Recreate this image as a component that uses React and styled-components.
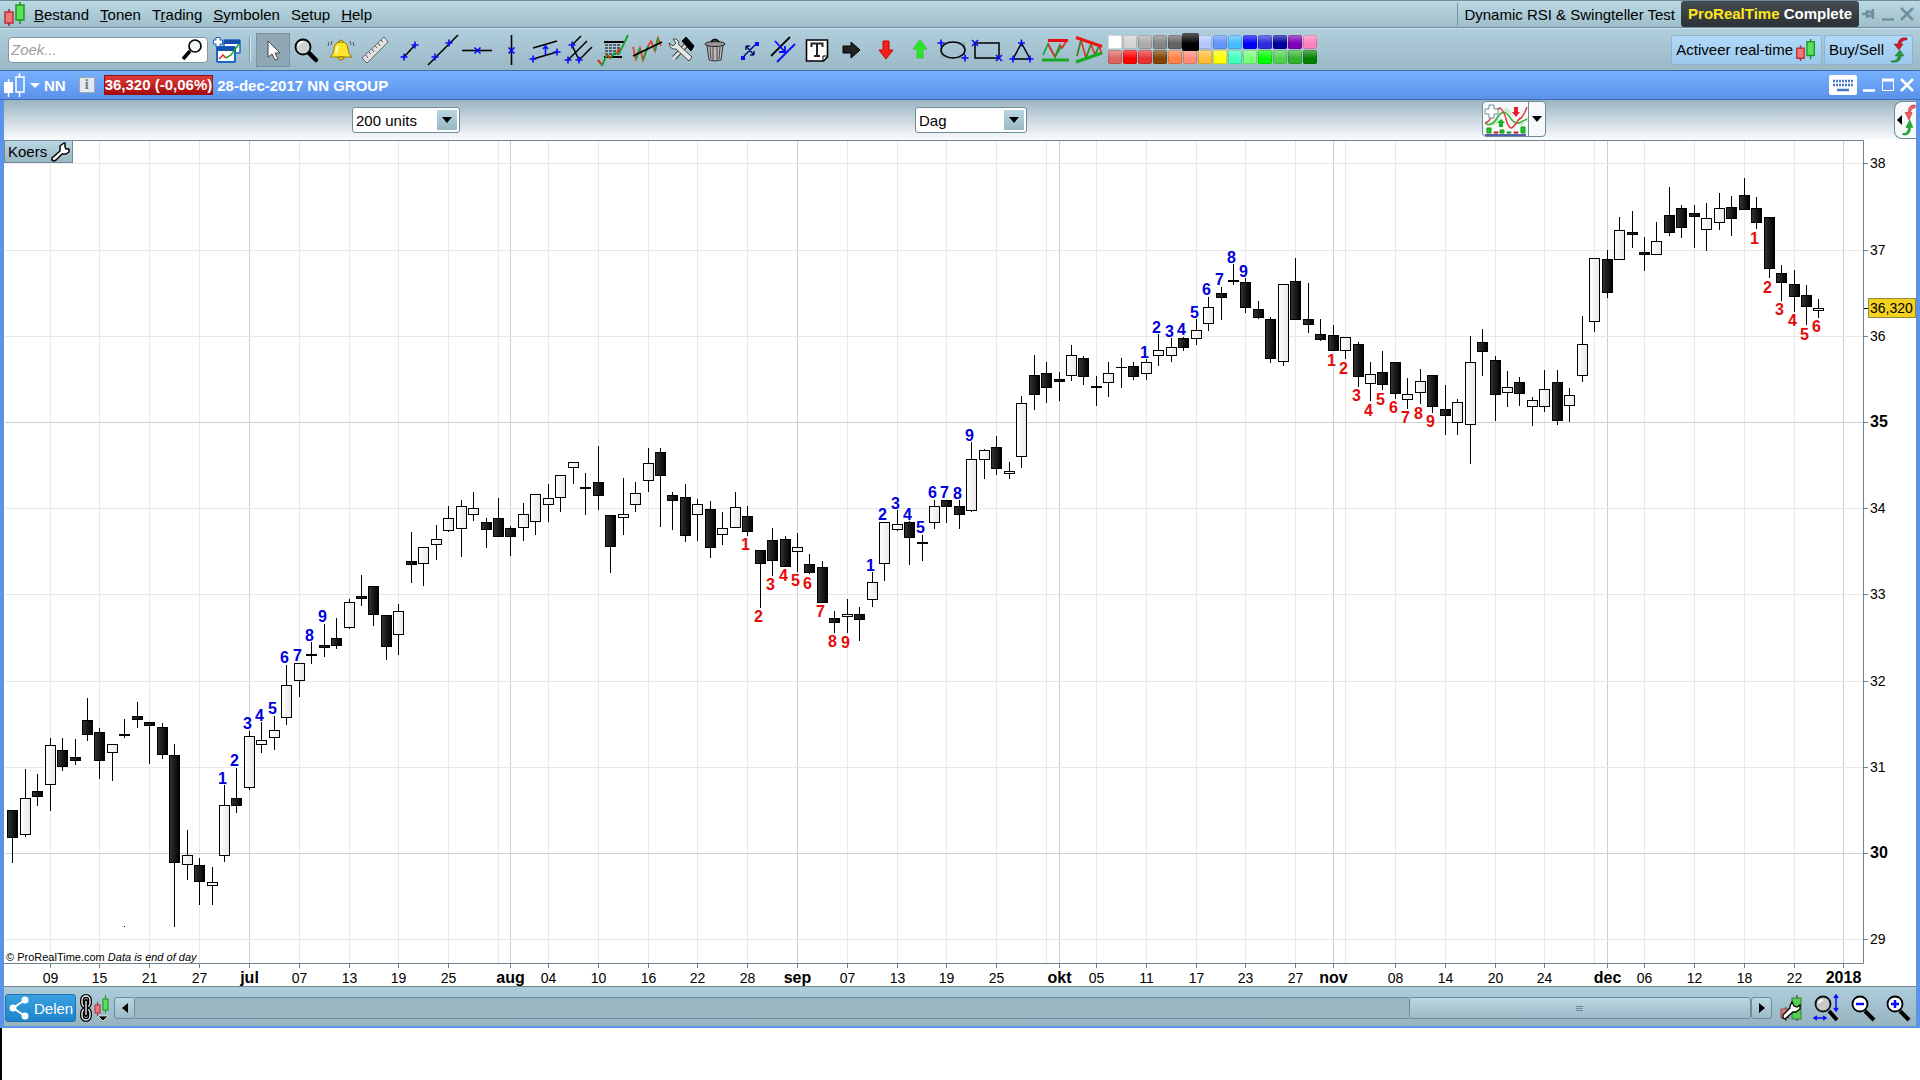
import React from "react";
import styled, { createGlobalStyle } from "styled-components";

const GlobalStyle = createGlobalStyle`
  * {
    box-sizing: border-box;
  }
  body {
    margin: 0;
    background: #fff;
    color: #000;
    font-family: "Liberation Sans", Arial, sans-serif;
    font-size: 15px;
  }
  button {
    font: inherit;
    color: inherit;
    background: none;
    border: 0;
    padding: 0;
  }
  svg {
    display: block;
  }
`;

/* ---------- data ---------- */

const MENU = [
  ["", "B", "estand"],
  ["", "T", "onen"],
  ["T", "r", "ading"],
  ["", "S", "ymbolen"],
  ["S", "e", "tup"],
  ["", "H", "elp"],
];

const COLORS = [
  ["#ffffff", "#d3d3d3", "#ababab", "#838383", "#636363", "#000000", "#b4c8ff", "#6496ff", "#46beff", "#0000ff", "#2d2ddc", "#0000a0", "#7d00b4", "#ff82be"],
  ["#dc6464", "#ff0000", "#e63232", "#824100", "#ff8246", "#ff8c78", "#ffbe3c", "#ffff00", "#46ffbe", "#78ff78", "#00ff00", "#50d250", "#32b432", "#008200"],
];

// [high, body top, body bottom, low, filled]
const CANDLES = [
  [810, 810, 838, 863, 1], [769, 798, 835, 837, 0], [774, 791, 797, 806, 1], [738, 745, 785, 811, 0],
  [738, 750, 767, 771, 1], [739, 757, 761, 765, 1], [698, 720, 735, 741, 1], [728, 732, 761, 779, 1],
  [744, 744, 753, 781, 0], [719, 734, 736, 738, 1], [702, 716, 720, 728, 1], [722, 722, 726, 764, 1],
  [723, 727, 755, 759, 1], [744, 755, 863, 927, 1], [830, 855, 865, 880, 0], [858, 865, 882, 905, 1],
  [867, 882, 886, 905, 0], [785, 805, 856, 862, 0], [768, 798, 806, 813, 1], [731, 736, 788, 790, 0],
  [722, 740, 745, 753, 0], [716, 730, 738, 750, 0], [665, 685, 718, 725, 0], [663, 663, 681, 697, 0],
  [642, 654, 656, 664, 1], [624, 645, 648, 657, 1], [618, 638, 646, 649, 1], [599, 602, 628, 629, 0],
  [575, 596, 599, 606, 1], [586, 586, 615, 626, 1], [615, 615, 647, 660, 1], [604, 611, 635, 655, 0],
  [532, 561, 565, 583, 1], [547, 547, 564, 586, 0], [525, 539, 545, 560, 0], [506, 518, 531, 532, 0],
  [500, 506, 529, 557, 0], [492, 508, 515, 521, 0], [518, 522, 530, 548, 1], [498, 518, 537, 537, 1],
  [526, 528, 537, 556, 1], [503, 514, 528, 541, 0], [494, 494, 522, 535, 0], [484, 498, 505, 522, 0],
  [475, 475, 498, 512, 0], [462, 462, 468, 484, 0], [473, 487, 489, 515, 1], [446, 482, 496, 510, 1],
  [515, 515, 547, 573, 1], [478, 514, 518, 535, 0], [482, 493, 505, 512, 0], [448, 463, 481, 492, 0],
  [448, 452, 476, 527, 1], [492, 495, 501, 530, 1], [484, 497, 536, 542, 1], [499, 504, 515, 541, 0],
  [501, 509, 548, 558, 1], [512, 528, 535, 545, 0], [492, 507, 528, 528, 0], [506, 516, 532, 536, 1],
  [550, 550, 564, 608, 1], [528, 540, 561, 576, 1], [536, 539, 567, 567, 1], [533, 547, 552, 572, 0],
  [554, 564, 573, 574, 1], [561, 567, 603, 603, 1], [611, 618, 623, 633, 1], [599, 614, 617, 633, 0],
  [607, 614, 620, 641, 1], [572, 582, 600, 607, 0], [522, 522, 564, 581, 0], [510, 524, 530, 531, 0],
  [521, 522, 538, 565, 1], [535, 542, 544, 561, 1], [500, 506, 523, 529, 0], [500, 500, 507, 523, 1],
  [500, 506, 515, 529, 1], [442, 459, 511, 512, 0], [449, 450, 460, 479, 0], [436, 447, 469, 475, 1],
  [462, 471, 474, 479, 0], [396, 403, 457, 468, 0], [355, 375, 395, 410, 1], [362, 373, 388, 403, 1],
  [372, 379, 382, 401, 1], [345, 355, 376, 381, 0], [356, 358, 377, 385, 1], [376, 386, 388, 406, 1],
  [362, 373, 383, 397, 0], [358, 367, 368, 388, 1], [362, 366, 377, 380, 1], [359, 362, 374, 380, 0],
  [334, 350, 356, 366, 0], [338, 347, 356, 362, 0], [337, 338, 348, 351, 1], [319, 330, 339, 345, 0],
  [297, 307, 324, 331, 0], [287, 293, 298, 320, 1], [264, 280, 282, 285, 1], [278, 282, 308, 313, 1],
  [301, 309, 318, 319, 1], [317, 319, 359, 363, 1], [284, 284, 362, 366, 0], [258, 281, 320, 320, 1],
  [283, 319, 325, 333, 1], [319, 334, 340, 341, 1], [325, 335, 351, 351, 1], [337, 337, 351, 359, 0],
  [342, 344, 377, 387, 1], [362, 374, 384, 401, 0], [351, 372, 385, 390, 1], [362, 362, 394, 399, 1],
  [378, 394, 400, 409, 0], [369, 381, 393, 404, 0], [375, 375, 407, 413, 1], [385, 409, 416, 435, 1],
  [399, 402, 423, 435, 0], [336, 362, 425, 464, 0], [329, 342, 352, 376, 1], [356, 360, 395, 421, 1],
  [371, 387, 393, 407, 0], [377, 382, 394, 406, 1], [397, 400, 407, 426, 0], [370, 389, 407, 412, 0],
  [370, 382, 421, 425, 1], [388, 395, 406, 422, 0], [316, 344, 376, 382, 0], [258, 258, 322, 332, 0],
  [250, 259, 293, 298, 1], [217, 230, 260, 260, 0], [211, 232, 235, 248, 1], [237, 252, 255, 271, 1],
  [222, 241, 255, 255, 0], [187, 215, 233, 236, 1], [205, 208, 228, 238, 1], [205, 213, 217, 248, 1],
  [203, 218, 230, 251, 0], [193, 208, 223, 230, 0], [196, 207, 219, 236, 1], [178, 195, 210, 210, 1],
  [197, 208, 223, 229, 1], [217, 217, 269, 278, 1], [265, 273, 283, 301, 1], [270, 284, 297, 312, 1],
  [285, 295, 307, 325, 1], [299, 308, 311, 318, 0],
];

const UP = "#0000dc";
const DOWN = "#e60a0a";

// first candle of the count, colour, baseline of every digit
const COUNTS = [
  { from: 17, color: UP, ys: [784, 766, 729, 721, 714, 663, 661, 641, 622] },
  { from: 59, color: DOWN, ys: [550, 622, 590, 581, 586, 589, 617, 647, 648] },
  { from: 69, color: UP, ys: [571, 520, 509, 520, 533, 498, 498, 499, 441] },
  { from: 91, color: UP, ys: [358, 333, 337, 335, 318, 295, 285, 263, 277] },
  { from: 106, color: DOWN, ys: [366, 374, 401, 416, 405, 413, 423, 419, 427] },
  { from: 140, color: DOWN, ys: [244, 293, 315, 326, 340, 332] },
];

const DATES = [
  [3, "09"], [7, "15"], [11, "21"], [15, "27"], [19, "jul"], [23, "07"], [27, "13"], [31, "19"], [35, "25"],
  [39, ""], [40, "aug"], [43, "04"], [47, "10"], [51, "16"], [55, "22"], [59, "28"], [63, "sep"], [67, "07"],
  [71, "13"], [75, "19"], [79, "25"], [83, ""], [84, "okt"], [87, "05"], [91, "11"], [95, "17"], [99, "23"],
  [103, "27"], [106, "nov"], [107, ""], [111, "08"], [115, "14"], [119, "20"], [123, "24"], [127, ""],
  [128, "dec"], [131, "06"], [135, "12"], [139, "18"], [143, "22"], [147, "2018"],
];

const PRICES = [
  [163, 38], [250, 37], [336, 36], [422, 35], [508, 34],
  [594, 33], [681, 32], [767, 31], [853, 30], [939, 29],
];

const candleX = (i) => 12 + Math.round(i * 12.4565 + 0.23) + 0.5;

/* ---------- icons ---------- */

function Icon({ w = 34, h = 34, children }) {
  return (
    <svg width={w} height={h} viewBox={`0 0 ${w} ${h}`} fill="none" stroke="#000" aria-hidden="true">
      {children}
    </svg>
  );
}

function Plus({ x, y }) {
  return <path d={`M${x - 3.5} ${y}h7M${x} ${y - 3.5}v7`} stroke="#0a0aff" strokeWidth="1.6" />;
}

function Times({ x, y }) {
  return <path d={`M${x - 3} ${y - 3}l6 6M${x + 3} ${y - 3}l-6 6`} stroke="#0a0aff" strokeWidth="1.6" />;
}

function Pair({ w = 22, h = 26 }) {
  return (
    <svg width={w} height={h} viewBox="0 0 22 26" aria-hidden="true">
      <path d="M5 8v17" stroke="#a02828" strokeWidth="1.5" />
      <rect x="1" y="11" width="8" height="11" fill="#f07878" stroke="#b02c2c" strokeWidth="1.4" />
      <path d="M16 1v22" stroke="#149614" strokeWidth="1.5" />
      <rect x="12" y="4" width="8" height="15" fill="#5ae05a" stroke="#149614" strokeWidth="1.4" />
    </svg>
  );
}

function SwapArrows({ w = 18, h = 26, red = "#c81e28", green = "#28963c" }) {
  return (
    <svg width={w} height={h} viewBox="0 0 18 26" preserveAspectRatio="none" aria-hidden="true">
      <path d="M17 1C11 0 8 3 8 7H4l5 6 4-6h-2c0-2 2-4 6-4z" fill={red} stroke="#96141e" strokeWidth=".5" />
      <path d="M1 25c7 1 10-2 10-6h3l-4-6-5 6h3c0 3-2 5-7 5z" fill={green} stroke="#14701e" strokeWidth=".5" />
    </svg>
  );
}

function Wrench({ size = 20 }) {
  return (
    <svg width={size} height={size} viewBox="0 0 20 20" aria-hidden="true">
      <path
        d="M10 9V4l4-3h1v4l1 2h3v3l-3 2h-4l-6 6-2 1-2-1v-2z"
        fill="#fff" stroke="#000" strokeWidth="1.500" strokeLinejoin="round"
      />
    </svg>
  );
}

const TOOLS = [
  ["Selecteren", <path d="M12 8v16l4-3 3 6 3-1-3-6h5z" fill="#fff" stroke="#444" />],
  ["Zoom", <>
    <path d="M18 19l8 8" strokeWidth="4.5" strokeLinecap="round" />
    <circle cx="13" cy="14" r="7.5" fill="#cfd2d2" strokeWidth="1.8" />
    <path d="M8 13q1-4 5-4" stroke="#fff" strokeWidth="2" />
  </>],
  ["Alarm", <>
    <path d="M6 24q4-3 4-8 0-7 7-7t7 7q0 5 4 8z" fill="#ffe628" stroke="#96780a" />
    <path d="M14 24a3 3 0 0 0 6 0zM15 9a2 2 0 0 1 4 0" fill="#f0c814" stroke="#96780a" />
    <path d="M5 9l-1 4M8 8l-1 4M26 8l1 4M29 9l1 4" stroke="#555" />
    <path d="M14 13q-2 4-2 8" stroke="#fffbc0" strokeWidth="2" />
  </>],
  ["Meten", <>
    <path d="M4 25L26 4l4 5L9 30z" fill="#e2e2e2" stroke="#666" />
    <path d="M8 22l2 3M11 19l2 2M14 16l2 3M17 13l2 2M20 10l2 3M23 7l2 2" stroke="#555" />
  </>],
  ["Segment", <><path d="M12 24l11-12" strokeWidth="1.6" /><Plus x={12} y={24} /><Plus x={23} y={12} /></>],
  ["Lijn", <><path d="M2 32L32 2" strokeWidth="1.6" /><Plus x={9} y={24} /><Plus x={23} y={10} /></>],
  ["Horizontale lijn", <><path d="M2 17.5h30" strokeWidth="1.6" /><Times x={17.5} y={17.5} /></>],
  ["Verticale lijn", <><path d="M17.5 2v30" strokeWidth="1.6" /><Times x={17.5} y={17.5} /></>],
  ["Kanaal", <>
    <path d="M5 15l24-7M5 26l24-7" strokeWidth="1.6" />
    <path d="M17.5 22v-8M15 16l2.5-3 2.5 3" stroke="#0a0aff" strokeWidth="1.6" />
    <Plus x={5} y={26} /><Plus x={29} y={19} />
  </>],
  ["Vork", <>
    <path d="M6 27L25 8M17 27l13-13M10 12l9-9M10 12l7 15" strokeWidth="1.5" />
    <Plus x={10} y={12} /><Plus x={6} y={27} /><Plus x={17} y={27} />
  </>],
  ["Fibonacci", <>
    <path d="M8 9h20M8 24h18" strokeWidth="1.8" />
    <path d="M9 12h16M9 15h16M9 18h16M9 21h14" strokeDasharray="3 1" />
    <path d="M2 27l4 5 5-10 3 3 5-5 4 1 9-19" stroke="#14a028" strokeWidth="1.8" />
    <path d="M2 27l3 4M11 22l3 3M21 20l3-5" stroke="#f01e1e" strokeWidth="1.8" />
  </>],
  ["Regressie", <>
    <path d="M3 14l3 12 4-11 3 12 5-14 3-5 4 10 3-13 3 8" stroke="#f03c28" strokeWidth="1.7" />
    <path d="M6 26l4-11M13 27l5-14M25 18l3-13" stroke="#14a028" strokeWidth="1.8" />
    <path d="M3 23L32 9" strokeWidth="1.8" />
  </>],
  ["Instellingen", <>
    <path d="M10 25L23 11" stroke="#444" strokeWidth="5" /><path d="M9 26L22 12" stroke="#ddd" strokeWidth="3" />
    <path d="M18 8l4-4 8 9-3 5z" fill="#000" />
    <path d="M5 10l4 3 3-3-3-4q6-1 6 6l13 12-3 4-13-12q-6 1-7-6z" fill="#e8e8e8" stroke="#444" />
  </>],
  ["Verwijderen", <>
    <path d="M9 12h16l-2 15q-6 2-12 0z" fill="#bbb" stroke="#333" />
    <path d="M12 14l1 12M15 14v13M19 14v13M22 14l-1 12" stroke="#444" />
    <ellipse cx="17" cy="11" rx="10" ry="2.5" fill="#999" stroke="#222" />
    <path d="M13 9q4-5 8 0" stroke="#111" strokeWidth="2" />
  </>],
  ["Segment kopiëren", <>
    <path d="M12 23L23 12M14 13l8 9M14 13v4M14 13h4M22 22v-4M22 22h-4" strokeWidth="1.5" stroke="#001478" />
    <path d="M9 23h4v4H9zM23 9h4v4h-4z" fill="#0a0aff" stroke="none" />
  </>],
  ["Parallel", <>
    <path d="M5 23L24 4" strokeWidth="1.8" /><path d="M11 29l18-18" stroke="#0a0aff" strokeWidth="1.8" />
    <path d="M9 8l10 11M19 13v6h-6" stroke="#0a0aff" strokeWidth="1.8" />
  </>],
  ["Tekst", <>
    <path d="M6.5 7h21v17l-4 4h-17z" fill="#fff" strokeWidth="1.6" /><path d="M27 23h-4v5" />
    <path d="M11.5 14v-3.500h11V14M17 11v12M14 23h6" stroke="#222" strokeWidth="2" />
  </>],
  ["Pijl rechts", <path d="M9 13h8V9l9 8-9 8v-5H9z" fill="#222" />],
  ["Pijl omlaag", <path d="M15 8h6v9h4l-7 9-7-9h4z" fill="#fa1e1e" stroke="#c80000" />],
  ["Pijl omhoog", <path d="M15 25h6v-9h4l-7-9-7 9h4z" fill="#28e628" stroke="#32c832" />],
  ["Ellips", <>
    <rect x="5.500" y="9.500" width="23" height="15" stroke="#8aa4b0" />
    <ellipse cx="17" cy="17" rx="12" ry="8" strokeWidth="1.5" /><Plus x={5} y={10} /><Plus x={29} y={25} />
  </>],
  ["Rechthoek", <>
    <rect x="5" y="10" width="24" height="15" strokeWidth="1.5" /><Times x={5} y={10} /><Times x={29} y={25} />
  </>],
  ["Driehoek", <>
    <path d="M17.500 10L9 26h17z" strokeWidth="1.5" /><Plus x={17.5} y={10} /><Plus x={9} y={26} /><Plus x={26} y={26} />
  </>],
  ["Dubbele top", <>
    <path d="M5 22l5-11 7 13 6-10" stroke="#14a028" strokeWidth="1.6" />
    <path d="M10 11l7 13 5-12 2 3 5-8" stroke="#e6281e" strokeWidth="1.6" />
    <path d="M17 24l5-12" stroke="#14a028" strokeWidth="1.6" />
    <path d="M10 7.500h20" stroke="#e60f14" strokeWidth="3" /><path d="M4 27h27" stroke="#14aa1e" strokeWidth="3" />
  </>],
  ["Driehoekpatroon", <>
    <path d="M5 23L9 7l5 18 5-14 4 11 4-9 3 8" stroke="#e6281e" strokeWidth="1.5" />
    <path d="M5 23L9 7M14 25l5-14M23 22l4-9" stroke="#14a028" strokeWidth="1.5" />
    <path d="M4 4.500l26 9" stroke="#f01414" strokeWidth="3" /><path d="M4 29l26-9" stroke="#14aa1e" strokeWidth="3" />
  </>],
];

/* ---------- parts ---------- */

function TopMenu() {
  return (
    <MenuBar>
      <Pair w={22} h={26} />
      <nav>
        {MENU.map(([before, key, after]) => (
          <button key={before + key + after}>{before}<u>{key}</u>{after}</button>
        ))}
      </nav>
      <div className="workspace">Dynamic RSI &amp; Swingteller Test</div>
      <Brand><span>ProRealTime</span> Complete</Brand>
      <WindowButtons $tight>
        <button aria-label="Vastzetten">
          <Icon w={14} h={14}><path d="M0 7h5M5 3v8M5 5h5v4H5M11 2v10" stroke="#71909e" strokeWidth="2.500" /></Icon>
        </button>
        <button aria-label="Minimaliseren">
          <Icon w={14} h={14}><path d="M1 12.500h12" stroke="#71909e" strokeWidth="2.500" /></Icon>
        </button>
        <button aria-label="Sluiten">
          <Icon w={14} h={14}><path d="M1 1l12 12M13 1L1 13" stroke="#71909e" strokeWidth="2.500" /></Icon>
        </button>
      </WindowButtons>
    </MenuBar>
  );
}

function Toolbar() {
  return (
    <ToolBar>
      <Search>
        <input type="search" aria-label="Zoeken" placeholder="Zoek..." />
        <Icon w={22} h={24}>
          <circle cx="14" cy="8" r="6" fill="#f4f6f6" strokeWidth="1.700" />
          <path d="M9 13l-7 8" strokeWidth="3.500" />
        </Icon>
      </Search>
      <button aria-label="Nieuw venster">
        <Icon w={28} h={28}>
          <rect x="11" y="4" width="16" height="13" rx="1" fill="#fff" stroke="#1e64c8" strokeWidth="1.500" />
          <path d="M11 6h16" stroke="#1450aa" strokeWidth="4" />
          <rect x="4" y="11" width="18" height="15" rx="1" fill="#fff" stroke="#1e64c8" strokeWidth="2" />
          <path d="M4 13h18" stroke="#1450aa" strokeWidth="4" />
          <path d="M6 23l4-4 3 3" stroke="#e61e1e" strokeWidth="1.500" />
          <path d="M13 22l5-3 8-11" stroke="#14aa28" strokeWidth="1.500" />
          <path d="M5 1v10M0 6h10" stroke="#2864b4" strokeWidth="5" /><path d="M5 2v8M1 6h8" stroke="#fff" strokeWidth="3" />
        </Icon>
      </button>
      <Separator />
      <Tools>
        {TOOLS.map(([label, drawing], i) => (
          <ToolButton key={label} aria-label={label} $active={i === 0}>
            <Icon>{drawing}</Icon>
          </ToolButton>
        ))}
      </Tools>
      <Palette>
        {COLORS.flat().map((color) => (
          <Swatch key={color} aria-label={`Kleur ${color}`} $color={color} $selected={color === "#000000"} />
        ))}
      </Palette>
      <Actions>
        <ActionButton>Activeer real-time <Pair w={22} h={24} /></ActionButton>
        <ActionButton>Buy/Sell <SwapArrows /></ActionButton>
      </Actions>
    </ToolBar>
  );
}

function Dropdown({ label, width, options }) {
  return (
    <SelectBox $width={width}>
      <select aria-label={label}>
        {options.map((o) => <option key={o}>{o}</option>)}
      </select>
      <span><Icon w={10} h={6}><path d="M0 0h10L5 6z" fill="#000" stroke="none" /></Icon></span>
    </SelectBox>
  );
}

function TitleBar() {
  return (
    <Title>
      <Icon w={22} h={26}>
        <path d="M4.500 7v18M15.500 1v24" stroke="#fff" strokeWidth="1.500" />
        <rect x="0" y="10" width="9" height="11" fill="#fff" stroke="none" />
        <rect x="12" y="5" width="8" height="15" fill="#6ba3f8" stroke="#fff" strokeWidth="1.500" />
      </Icon>
      <button className="symbol">
        <Icon w={10} h={5}><path d="M0 0h10L5 5z" fill="#fff" stroke="none" /></Icon>
        NN
      </button>
      <InfoButton aria-label="Info">i</InfoButton>
      <Quote>36,320 (-0,06%)</Quote>
      <span>28-dec-2017 NN GROUP</span>
      <WindowButtons>
        <button aria-label="Toetsenbord">
          <Icon w={28} h={20}>
            <rect width="28" height="20" rx="2" fill="#fff" stroke="none" />
            <path d="M4 6h21M4 10h21" stroke="#4678c8" strokeWidth="2.500" strokeDasharray="2 1" />
            <path d="M8 15h12" stroke="#4678c8" strokeWidth="2.500" />
          </Icon>
        </button>
        <button aria-label="Venster minimaliseren">
          <Icon w={14} h={14}><path d="M1 12.500h12" stroke="#fff" strokeWidth="2.500" /></Icon>
        </button>
        <button aria-label="Venster maximaliseren">
          <Icon w={14} h={14}><path d="M1.500 1v11.500h11V1" stroke="#fff" /><path d="M1 2h12" stroke="#fff" strokeWidth="3" /></Icon>
        </button>
        <button aria-label="Venster sluiten">
          <Icon w={14} h={14}><path d="M1 1l12 12M13 1L1 13" stroke="#fff" strokeWidth="2.500" /></Icon>
        </button>
      </WindowButtons>
    </Title>
  );
}

function OptionsBar() {
  return (
    <Options>
      <Dropdown label="Aantal units" width={108} options={["200 units", "500 units", "1000 units"]} />
      <Dropdown label="Tijdseenheid" width={112} options={["Dag", "Week", "Maand"]} />
      <div className="last">
        <Indicator>
          <button aria-label="Indicator toevoegen">
            <Icon w={45} h={33}>
              <path d="M2 20q5 5 10-4t11-7q4 1 8 7t14 2v-4q-4 10-8 8t-8-10-6-7-7 11-7 4-7 0z" fill="#c8ebc8" stroke="none" />
              <path d="M2 20q6 5 12-5t12-2q6 9 10 7t8-4" stroke="#3cb43c" strokeWidth="1.500" />
              <path d="M2 20q4-1 7-7t8-8q4 3 6 11t5 9q2 0 6-6t3-3q3-2 7-12" stroke="#dc3c3c" strokeWidth="1.500" />
              <path d="M31 4h4v5h2l-4 5-4-5h2z" fill="#e61e28" stroke="none" />
              <path d="M18 16l4 4h-2v4h-4v-4h-2z" fill="#14b41e" stroke="none" />
              <path d="M4 25h4v5H4zM17 27h4v3h-4zM24 29h4v1h-4zM38 24h4v6h-4z" fill="#14c81e" stroke="#149614" />
              <path d="M11 29h4v1h-4zM31 29h4v1h-4z" fill="#e63232" stroke="#b41e1e" />
              <path d="M2 32h41" stroke="#1e2896" strokeWidth="1.500" />
              <path d="M6 2h5v4h4v5h-4v4H6v-4H2V6h4z" fill="#fff" stroke="#6e8c9a" />
            </Icon>
          </button>
          <button className="more" aria-label="Meer indicatoren">
            <Icon w={10} h={6}><path d="M0 0h10L5 6z" fill="#000" stroke="none" /></Icon>
          </button>
        </Indicator>
        <SideTab aria-label="Orderpaneel">
          <Icon w={5} h={10}><path d="M5 0v10L0 5z" fill="#000" stroke="none" /></Icon>
          <SwapArrows w={14} h={32} red="#fa5a64" green="#1eb428" />
        </SideTab>
      </div>
    </Options>
  );
}

function Chart() {
  return (
    <ChartArea>
      <svg viewBox="4 140 1912 847" role="img" aria-label="Koersgrafiek NN GROUP">
        <defs>
          <linearGradient id="dark"><stop offset="0" stopColor="#333" /><stop offset="1" stopColor="#000" /></linearGradient>
          <linearGradient id="light"><stop offset="0" stopColor="#fff" /><stop offset="1" stopColor="#e8e8e8" /></linearGradient>
        </defs>
        {DATES.map(([i, text]) => (
          <path key={i} d={`M${candleX(i)} 141V963`} stroke={isNaN(text) || text === "2018" ? "#cfcfcf" : "#e8e8e8"} />
        ))}
        {PRICES.map(([y, price]) => (
          <path key={price} d={`M5 ${y + 0.5}H1863`} stroke={price % 5 ? "#e8e8e8" : "#cfcfcf"} />
        ))}
        {CANDLES.map(([high, top, bottom, low, filled], i) => {
          const x = candleX(i);
          return (
            <g key={i} stroke="#000">
              <path d={`M${x} ${high}V${low}`} />
              {bottom - top < 3 ? (
                <rect x={x - 5.5} y={top} width="11" height={bottom - top} fill="#000" stroke="none" />
              ) : (
                <rect x={x - 5} y={top + 0.5} width="10" height={bottom - top - 1} fill={filled ? "url(#dark)" : "url(#light)"} />
              )}
            </g>
          );
        })}
        <rect x="124" y="926" width="1" height="1" />
        {COUNTS.map(({ from, color, ys }) =>
          ys.map((y, n) => (
            <CountText key={from + n} x={candleX(from + n) - 2} y={y} fill={color}>{n + 1}</CountText>
          ))
        )}
        <path d="M4 140.5H1863.5V963.500H4M4 986.500H1916" fill="none" stroke="#71848e" />
        {DATES.filter(([, text]) => text).map(([i, text]) => (
          <g key={i}>
            <path d={`M${candleX(i)} 964v4`} stroke="#71848e" />
            <AxisText x={candleX(i)} y="983" textAnchor="middle" $bold={isNaN(text) || text === "2018"}>{text}</AxisText>
          </g>
        ))}
        {PRICES.map(([y, price]) => (
          <g key={price}>
            <path d={`M1864 ${y + 0.5}h4`} stroke="#71848e" />
            <AxisText x="1870" y={y + 5} $bold={price % 5 === 0}>{price}</AxisText>
          </g>
        ))}
        <path d="M1864 308.500h4" stroke="#000" />
        <rect x="1868.500" y="298.500" width="47" height="19" fill="#f5d21e" stroke="#8c8c46" />
        <AxisText x="1870" y="313">36,320</AxisText>
        <NoteText x="6" y="961">© ProRealTime.com <tspan fontStyle="italic">Data is end of day</tspan></NoteText>
      </svg>
      <ChartTag>Koers <Wrench /></ChartTag>
    </ChartArea>
  );
}

function Glass({ children }) {
  return (
    <Icon w={26} h={28}>
      <path d="M15 17l9 9" strokeWidth="4" />
      <circle cx="10" cy="10" r="7.500" fill="#fff" strokeWidth="1.800" />
      {children}
    </Icon>
  );
}

function BottomBar() {
  return (
    <Footer>
      <ShareButton>
        <Icon w={20} h={26}>
          <path d="M16 5L4 13l12 8" stroke="#fff" strokeWidth="2" />
          <g fill="#fff" stroke="none"><circle cx="16" cy="5" r="3.500" /><circle cx="4" cy="13" r="3.500" /><circle cx="16" cy="21" r="3.500" /></g>
        </Icon>
        Delen
      </ShareButton>
      <button aria-label="Koppelen">
        <Icon w={32} h={28}>
          <path d="M3 6a4 4 0 0 1 8 0v3a4 4 0 0 1-8 0zM3 19a4 4 0 0 1 8 0v3a4 4 0 0 1-8 0z" strokeWidth="4" />
          <path d="M3 6a4 4 0 0 1 8 0v3a4 4 0 0 1-8 0zM3 19a4 4 0 0 1 8 0v3a4 4 0 0 1-8 0z" stroke="#fff" strokeWidth="1.300" />
          <path d="M7 7v14" strokeWidth="4" strokeLinecap="round" /><path d="M7 7v14" stroke="#fff" strokeWidth="1.300" />
          <path d="M18.500 8v14" stroke="#a02828" /><rect x="16" y="11" width="5" height="8" fill="#f07878" stroke="#b02c2c" />
          <path d="M26.500 1v18" stroke="#149614" /><rect x="24" y="5" width="5" height="11" fill="#5ae05a" stroke="#149614" />
          <path d="M19 22h10l-5 5z" fill="#000" stroke="#fff" strokeWidth=".7" />
        </Icon>
      </button>
      <ScrollBar>
        <ArrowButton aria-label="Naar links">
          <Icon w={6} h={10}><path d="M6 0v10L0 5z" fill="#000" stroke="none" /></Icon>
        </ArrowButton>
        <div className="track" />
        <div className="thumb">
          <Icon w={8} h={7}><path d="M0 1.500h7M0 3.500h7M0 5.500h7" stroke="#6e8c9a" /></Icon>
        </div>
        <ArrowButton aria-label="Naar rechts">
          <Icon w={6} h={10}><path d="M0 0v10l6-5z" fill="#000" stroke="none" /></Icon>
        </ArrowButton>
      </ScrollBar>
      <ZoomButtons>
        <button aria-label="Grafiekinstellingen">
          <Icon w={24} h={28}>
            <path d="M6 13v14M17 1v26" stroke="#4a6a4a" strokeWidth="1.500" />
            <rect x="1" y="15" width="8" height="9" fill="#dc7878" stroke="#8c5050" />
            <rect x="12" y="4" width="9" height="21" fill="#50d250" stroke="#3c783c" />
            <path d="M10 12l2-4 2 4 3 1 3-2v4l-4 3h-3l-8 7-2-1v-3l7-7z" fill="#fff" strokeWidth="1.300" />
          </Icon>
        </button>
        <button aria-label="Zoom herstellen">
          <Icon w={28} h={28}>
            <path d="M16 17l8 9" strokeWidth="4" />
            <circle cx="10" cy="10" r="7.500" fill="#c8c8c8" stroke="#111" strokeWidth="1.800" />
            <path d="M6 9q1-3 4-3" stroke="#fff" strokeWidth="2" />
            <path d="M23 2v14M21 4l2-3 2 3M21 14l2 3 2-3M2 24h10M4 22l-3 2 3 2M10 22l3 2-3 2" stroke="#0a0aff" strokeWidth="1.500" />
          </Icon>
        </button>
        <button aria-label="Uitzoomen"><Glass><path d="M6 10h8" stroke="#0a0aff" strokeWidth="2.500" /></Glass></button>
        <button aria-label="Inzoomen"><Glass><path d="M6 10h8M10 6v8" stroke="#0a0aff" strokeWidth="2.500" /></Glass></button>
      </ZoomButtons>
    </Footer>
  );
}

function App() {
  return (
    <Page>
      <GlobalStyle />
      <TopMenu />
      <Toolbar />
      <Window>
        <TitleBar />
        <OptionsBar />
        <Chart />
        <BottomBar />
      </Window>
      <Desktop />
    </Page>
  );
}

export default App;

/* ---------- styles ---------- */

const Page = styled.div`
  min-height: 100vh;
  display: flex;
  flex-direction: column;
`;

const MenuBar = styled.header`
  display: flex;
  align-items: center;
  height: 28px;
  padding: 0 6px 0 4px;
  background: linear-gradient(#bad9e5, #9fbeca);
  border-top: 1px solid #6e8c9a;
  border-bottom: 1px solid #6e8c9a;
  white-space: nowrap;
  nav {
    display: flex;
    gap: 11px;
    margin-left: 8px;
    flex: 1;
  }
  .workspace {
    border-left: 1px solid #7793a0;
    padding: 3px 6px;
  }
`;

const Brand = styled.div`
  height: 26px;
  line-height: 26px;
  padding: 0 7px;
  border-radius: 3px;
  color: #fff;
  font-weight: bold;
  background: linear-gradient(#454d54, #2b3136);
  span {
    color: #ffe61e;
  }
`;

const WindowButtons = styled.div`
  display: flex;
  align-items: center;
  gap: 5px;
  margin-left: ${(p) => (p.$tight ? "3px" : "auto")};
`;

const ToolBar = styled.div`
  display: flex;
  align-items: center;
  height: 42px;
  padding: 0 7px 0 8px;
  background: linear-gradient(#afcedb, #9bb8c5);
  border-top: 1px solid #c8e0ea;
`;

const Search = styled.div`
  display: flex;
  align-items: center;
  flex: none;
  width: 200px;
  height: 26px;
  margin-right: 5px;
  padding: 0 4px 0 2px;
  background: #fff;
  border: 1px solid #7e99a5;
  border-radius: 4px;
  input {
    flex: 1;
    min-width: 0;
    border: 0;
    padding: 0;
    outline: 0;
    background: none;
    font: italic 15px "Liberation Sans", Arial, sans-serif;
  }
  input::placeholder {
    color: #a0a0a0;
    opacity: 1;
  }
`;

const Separator = styled.div`
  width: 2px;
  height: 25px;
  margin: 0 5px 0 8px;
  background: #7f9ba8;
  border-right: 1px solid #d6e8ef;
`;

const Tools = styled.div`
  display: flex;
`;

const ToolButton = styled.button`
  width: 34px;
  height: 34px;
  background: ${(p) => (p.$active ? "#90a8b5" : "none")};
  box-shadow: ${(p) => (p.$active ? "inset 0 0 0 1px #7b929e" : "none")};
`;

const Palette = styled.div`
  display: grid;
  grid-template-columns: repeat(14, 15px);
  grid-auto-rows: 15px;
  margin-left: 2px;
`;

const Swatch = styled.button`
  margin: ${(p) => (p.$selected ? "-2px -1px -1px -1px" : "0 1px 1px 0")};
  border-radius: 2px;
  background: linear-gradient(#ffffff60, #ffffff00 60%), ${(p) => p.$color};
  box-shadow: inset 0 0 0 1px #00000028;
  z-index: ${(p) => (p.$selected ? 1 : 0)};
`;

const Actions = styled.div`
  display: flex;
  gap: 2px;
  margin-left: auto;
`;

const ActionButton = styled.button`
  display: flex;
  align-items: center;
  justify-content: space-between;
  gap: 2px;
  min-width: 89px;
  height: 30px;
  padding: 0 4px;
  white-space: nowrap;
  border: 1px solid #8db4d2;
  border-radius: 3px;
  background: linear-gradient(#b2daf8, #9cc8ec);
`;

const Window = styled.main`
  border: solid #5a93ea;
  border-width: 0 4px 2px 4px;
`;

const Title = styled.div`
  display: flex;
  align-items: center;
  height: 30px;
  margin: 0 -4px;
  padding: 0 6px 0 4px;
  color: #fff;
  font-weight: bold;
  background: linear-gradient(#78b0ff, #5a92ea);
  border-top: 1px solid #3c6cb4;
  border-bottom: 1px solid #3c6cb4;
  .symbol {
    display: flex;
    align-items: center;
    gap: 4px;
    margin-left: 4px;
  }
`;

const InfoButton = styled.button`
  width: 16px;
  height: 16px;
  margin: 0 9px 0 13px;
  background: #e6eaee;
  color: #6e7c88;
  border: 1px solid #a0aab4;
  font: bold 14px/14px "Liberation Serif", serif;
`;

const Quote = styled.span`
  margin-right: 4px;
  line-height: 18px;
  border: 1px solid #8c1414;
  background: linear-gradient(#dc3c3c, #aa0a0a);
`;

const Options = styled.div`
  display: grid;
  grid-template-columns: 348fr 563fr 567fr 434fr;
  align-items: center;
  height: 40px;
  background: linear-gradient(#9ab4c2, #fbfcfd);
  > :first-child {
    grid-column: 2;
  }
  .last {
    display: flex;
    justify-content: space-between;
  }
`;

const SelectBox = styled.div`
  position: relative;
  width: ${(p) => p.$width}px;
  height: 26px;
  select {
    appearance: none;
    width: 100%;
    height: 100%;
    padding: 0 24px 0 3px;
    background: #fff;
    border: 1px solid #6e8c9a;
    border-radius: 3px;
    color: #000;
    font: 15px "Liberation Sans", Arial, sans-serif;
  }
  span {
    position: absolute;
    top: 3px;
    right: 3px;
    bottom: 3px;
    width: 20px;
    display: grid;
    place-items: center;
    background: linear-gradient(#b9d7e3, #9ab7c4);
    pointer-events: none;
  }
`;

const Indicator = styled.div`
  display: flex;
  width: 64px;
  height: 36px;
  border: 1px solid #6e8c9a;
  border-radius: 4px;
  background: #f6f8f9;
  align-items: center;
  .more {
    flex: 1;
    align-self: stretch;
    display: grid;
    place-items: center;
    border-left: 1px solid #6e8c9a;
  }
`;

const SideTab = styled.button`
  display: flex;
  align-items: center;
  width: 22px;
  height: 38px;
  padding-left: 2px;
  background: #f6f8f9;
  border: 1px solid #6e8c9a;
  border-right: 0;
  border-radius: 8px 0 0 8px;
`;

const ChartArea = styled.section`
  position: relative;
  background: #fff;
  > svg {
    width: 100%;
    height: auto;
  }
`;

const ChartTag = styled.button`
  position: absolute;
  top: 0;
  left: 0;
  display: flex;
  align-items: center;
  gap: 3px;
  height: 23px;
  padding: 0 2px 0 3px;
  border: 1px solid #6e8c9a;
  background: linear-gradient(#b9d7e3, #9ab7c4);
`;

const AxisText = styled.text`
  font-size: ${(p) => (p.$bold ? 16 : 14)}px;
  font-weight: ${(p) => (p.$bold ? "bold" : "normal")};
`;

const CountText = styled.text`
  font-size: 16px;
  font-weight: bold;
  text-anchor: middle;
`;

const NoteText = styled.text`
  font-size: 11px;
`;

const Footer = styled.footer`
  display: flex;
  align-items: center;
  gap: 3px;
  height: 39px;
  padding: 3px 5px 0 1px;
  background: linear-gradient(#aecddb, #97b3c0);
`;

const ShareButton = styled.button`
  display: flex;
  align-items: center;
  gap: 5px;
  height: 28px;
  padding: 0 2px 0 3px;
  color: #fff;
  border: 1px solid #1c74b4;
  border-radius: 3px;
  background: linear-gradient(#38a0e2, #1f84cc);
`;

const ScrollBar = styled.div`
  display: flex;
  flex: 1;
  height: 22px;
  .track {
    flex: 1274;
    background: #9ab7c4;
    border: solid #6e8c9a;
    border-width: 1px 0;
  }
  .thumb {
    flex: 340;
    display: grid;
    place-items: center;
    border: 1px solid #6e8c9a;
    border-radius: 3px;
    background: linear-gradient(#b9d8e4, #9dbac7);
  }
`;

const ArrowButton = styled.button`
  width: 21px;
  display: grid;
  place-items: center;
  border: 1px solid #6e8c9a;
  border-radius: 3px;
  background: linear-gradient(#b9d8e4, #9dbac7);
`;

const ZoomButtons = styled.div`
  display: flex;
  gap: 9px;
  margin-left: 5px;
`;

const Desktop = styled.div`
  flex: 1;
  border-left: 2px solid #000;
`;
